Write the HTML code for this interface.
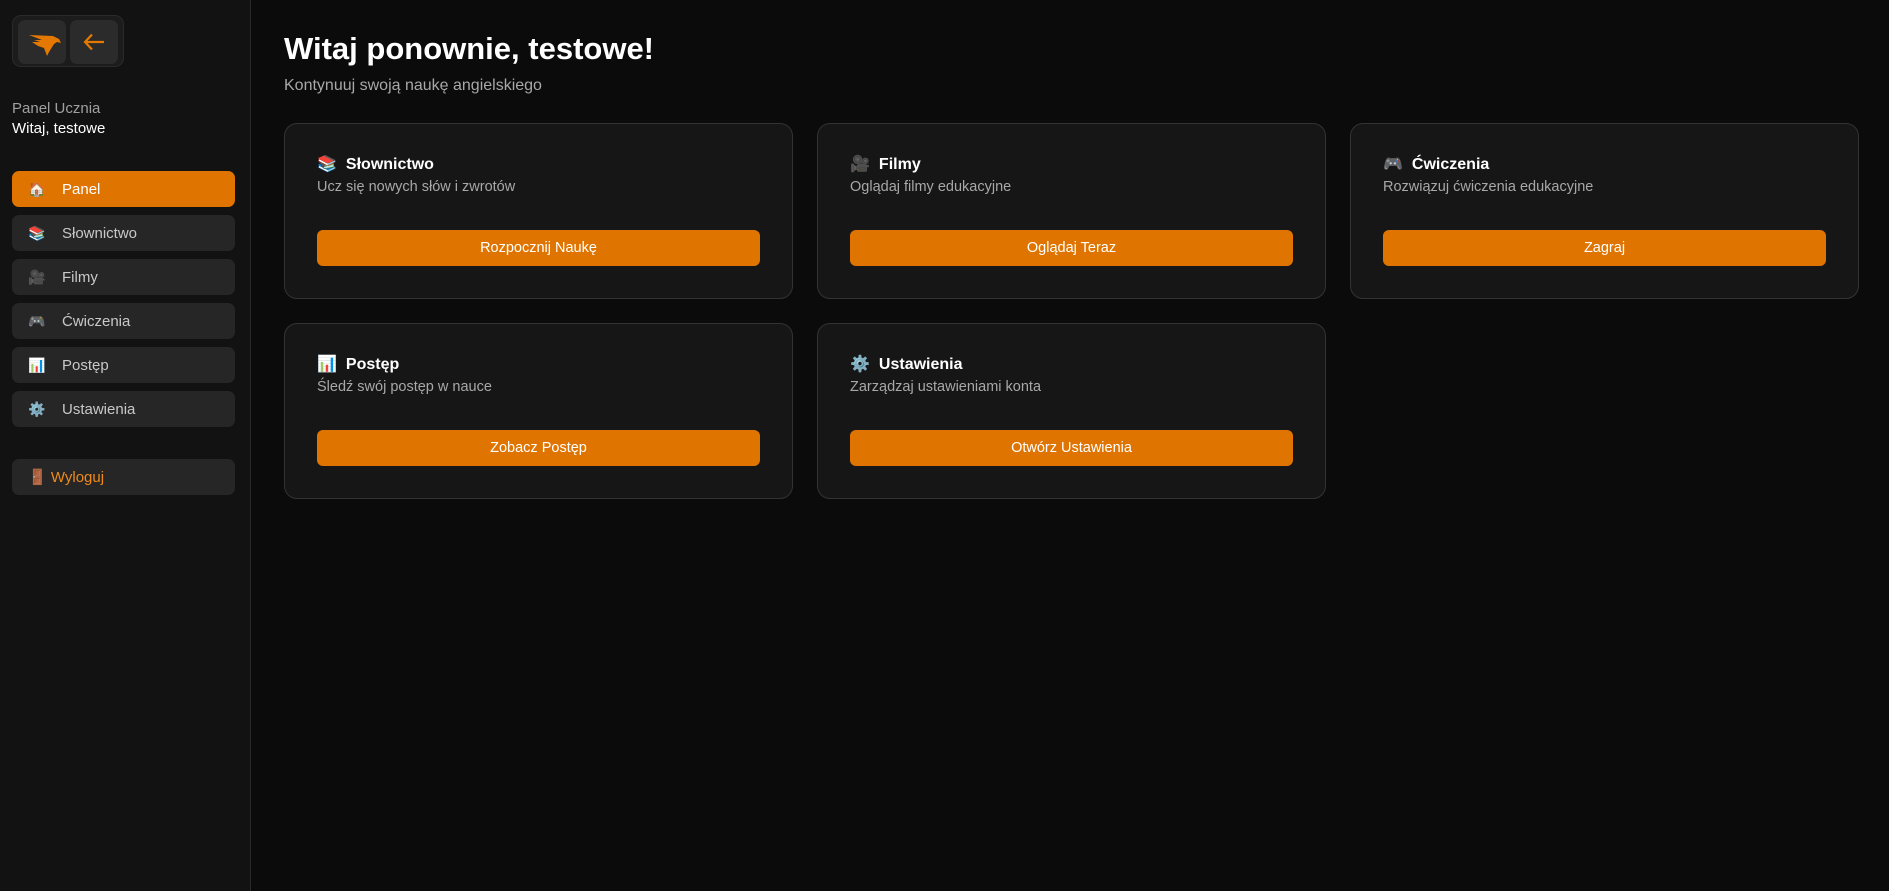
<!DOCTYPE html>
<html><head><meta charset="utf-8"><style>
*{box-sizing:border-box;margin:0;padding:0}
body{width:1889px;height:891px;background:#0b0b0b;font-family:"Liberation Sans","Noto Sans CJK JP",sans-serif;overflow:hidden;position:relative;color:#fff}
.side{position:absolute;left:0;top:0;width:251px;height:891px;background:#121212;border-right:1px solid #2a2a2a}
.logo{position:absolute;left:12px;top:15px;width:112px;height:52px;background:#1c1c1c;border:1px solid #2a2a2a;border-radius:9px}
.lb{position:absolute;top:4px;width:48px;height:44px;background:#2a2b2a;border-radius:7px}
.nav{position:absolute;left:12px;width:223px;height:36px;background:#262626;border-radius:7px;font-size:15px;color:#c8c8c8;line-height:37px}
.nav .i{position:absolute;left:16px;font-size:14px}
.nav .t{position:absolute;left:50px}
.nav.act{background:#e07400;color:#fff}
.card{position:absolute;width:509px;height:176px;background:#161616;border:1px solid #333;border-radius:13px}
.card h3{position:absolute;left:32px;top:30px;font-size:16px;font-weight:bold;color:#fff}
.card h3 span{margin-right:9px;font-size:16px}
.card p{position:absolute;left:32px;top:55px;font-size:14.5px;color:#a8a8a8}
.card .b{position:absolute;left:32px;top:106px;right:32px;height:36px;background:#e07400;border-radius:6px;text-align:center;line-height:37px;font-size:14.5px;color:#fff}
</style></head><body>
<div class="side">
 <div class="logo">
  <div class="lb" style="left:5px"><svg width="48" height="44" viewBox="0 0 48 44"><polygon points="11,15 35,16 41,19 43,23 39,22 36,24 31,32 29,36 26,28 20,26 14,22 22,22 16,20 24,20" fill="#e57800"/></svg></div>
  <div class="lb" style="left:57px"><svg width="48" height="44" viewBox="0 0 48 44"><path d="M15 22H34M22 14.5L15 22L22 29.5" stroke="#e57800" stroke-width="2.2" fill="none"/></svg></div>
 </div>
 <div style="position:absolute;left:12px;top:100px;font-size:15px;color:#a0a0a0">Panel Ucznia</div>
 <div style="position:absolute;left:12px;top:120px;font-size:15px;color:#fff">Witaj, testowe</div>
 <div class="nav act" style="top:171px"><span class="i">🏠</span><span class="t">Panel</span></div>
 <div class="nav" style="top:215px"><span class="i">📚</span><span class="t">Słownictwo</span></div>
 <div class="nav" style="top:259px"><span class="i">🎥</span><span class="t">Filmy</span></div>
 <div class="nav" style="top:303px"><span class="i">🎮</span><span class="t">Ćwiczenia</span></div>
 <div class="nav" style="top:347px"><span class="i">📊</span><span class="t">Postęp</span></div>
 <div class="nav" style="top:391px"><span class="i">⚙️</span><span class="t">Ustawienia</span></div>
 <div class="nav" style="top:459px;color:#f08a1a"><span style="position:absolute;left:16px">🚪 Wyloguj</span></div>
</div>
<div style="position:absolute;left:284px;top:31px;font-size:31px;font-weight:bold">Witaj ponownie, testowe!</div>
<div style="position:absolute;left:284px;top:77px;font-size:16px;color:#a8a8a8">Kontynuuj swoją naukę angielskiego</div>
<div class="card" style="left:284px;top:123px"><h3><span>📚</span>Słownictwo</h3><p>Ucz się nowych słów i zwrotów</p><div class="b">Rozpocznij Naukę</div></div>
<div class="card" style="left:817px;top:123px"><h3><span>🎥</span>Filmy</h3><p>Oglądaj filmy edukacyjne</p><div class="b">Oglądaj Teraz</div></div>
<div class="card" style="left:1350px;top:123px"><h3><span>🎮</span>Ćwiczenia</h3><p>Rozwiązuj ćwiczenia edukacyjne</p><div class="b">Zagraj</div></div>
<div class="card" style="left:284px;top:323px"><h3><span>📊</span>Postęp</h3><p>Śledź swój postęp w nauce</p><div class="b">Zobacz Postęp</div></div>
<div class="card" style="left:817px;top:323px"><h3><span>⚙️</span>Ustawienia</h3><p>Zarządzaj ustawieniami konta</p><div class="b">Otwórz Ustawienia</div></div>
</body></html>
